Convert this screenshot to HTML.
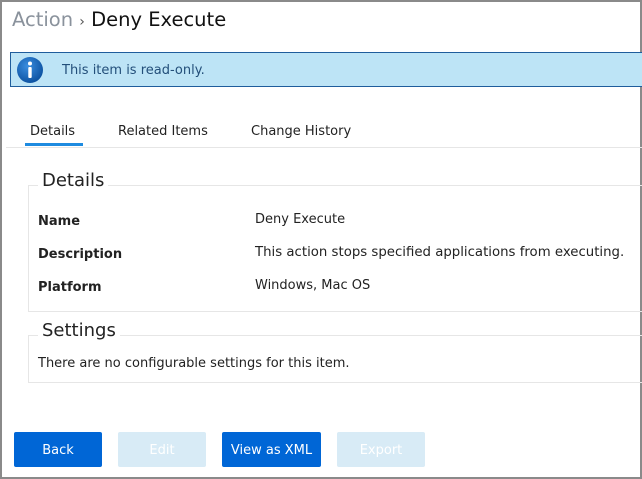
<html><head><style>
body{margin:0;width:642px;height:479px;overflow:hidden;font-family:"DejaVu Sans","Liberation Sans",sans-serif;background:#fff;position:relative}
.frame{position:absolute;left:0;top:0;width:638px;height:475px;border:2px solid #8a8a8a}
.a{position:absolute;white-space:nowrap}
.t{font-size:13px;color:#222}
.btn{position:absolute;top:432px;height:35px;border-radius:2px;color:#fff;font-size:13px;text-align:center;line-height:37px}
</style></head><body>
<div class="frame"></div>
<div class="a" style="left:12px;top:8px;font-size:19.5px;color:#8a929c">Action <span style="font-size:14px;color:#555">›</span> <span style="color:#111">Deny Execute</span></div>
<div class="a" style="left:10px;top:52px;width:632px;height:35px;background:#bde4f6;border:1px solid #1f5d9c;border-right:none;box-sizing:border-box"></div>
<svg class="a" style="left:15px;top:55px" width="30" height="30"><defs><radialGradient id="g" cx="40%" cy="35%" r="70%"><stop offset="0" stop-color="#3b8ee0"/><stop offset="1" stop-color="#0a4f9e"/></radialGradient></defs><circle cx="15" cy="15" r="13" fill="url(#g)"/><circle cx="15" cy="8.5" r="2" fill="#fff"/><rect x="13.3" y="12" width="3.4" height="11" rx="1" fill="#fff"/></svg>
<div class="a" style="left:62px;top:63px;font-size:13px;color:#234f7a">This item is read-only.</div>
<div class="a t" style="left:30px;top:124px">Details</div>
<div class="a t" style="left:118px;top:124px">Related Items</div>
<div class="a t" style="left:251px;top:124px">Change History</div>
<div class="a" style="left:25px;top:143px;width:58px;height:3px;background:#1e8be0"></div>
<div class="a" style="left:6px;top:147px;width:636px;height:1px;background:#e6e6e6"></div>
<div class="a" style="left:28px;top:185px;width:614px;height:127px;border:1px solid #e6e6e6;border-right:none;box-sizing:border-box"></div>
<div class="a" style="left:38px;top:170px;font-size:18px;color:#222;background:#fff;padding:0 4px">Details</div>
<div class="a t" style="left:38px;top:214px;font-weight:bold">Name</div>
<div class="a t" style="left:255px;top:212px">Deny Execute</div>
<div class="a t" style="left:38px;top:247px;font-weight:bold">Description</div>
<div class="a t" style="left:255px;top:245px;font-size:13.3px">This action stops specified applications from executing.</div>
<div class="a t" style="left:38px;top:280px;font-weight:bold">Platform</div>
<div class="a t" style="left:255px;top:278px">Windows, Mac OS</div>
<div class="a" style="left:28px;top:335px;width:614px;height:48px;border:1px solid #e6e6e6;border-right:none;box-sizing:border-box"></div>
<div class="a" style="left:38px;top:320px;font-size:18px;color:#222;background:#fff;padding:0 4px">Settings</div>
<div class="a t" style="left:38px;top:356px">There are no configurable settings for this item.</div>
<div class="btn" style="left:14px;width:88px;background:#0066d6">Back</div>
<div class="btn" style="left:118px;width:88px;background:#d8ebf6">Edit</div>
<div class="btn" style="left:222px;width:99px;background:#0066d6">View as XML</div>
<div class="btn" style="left:337px;width:88px;background:#d8ebf6">Export</div>
</body></html>
